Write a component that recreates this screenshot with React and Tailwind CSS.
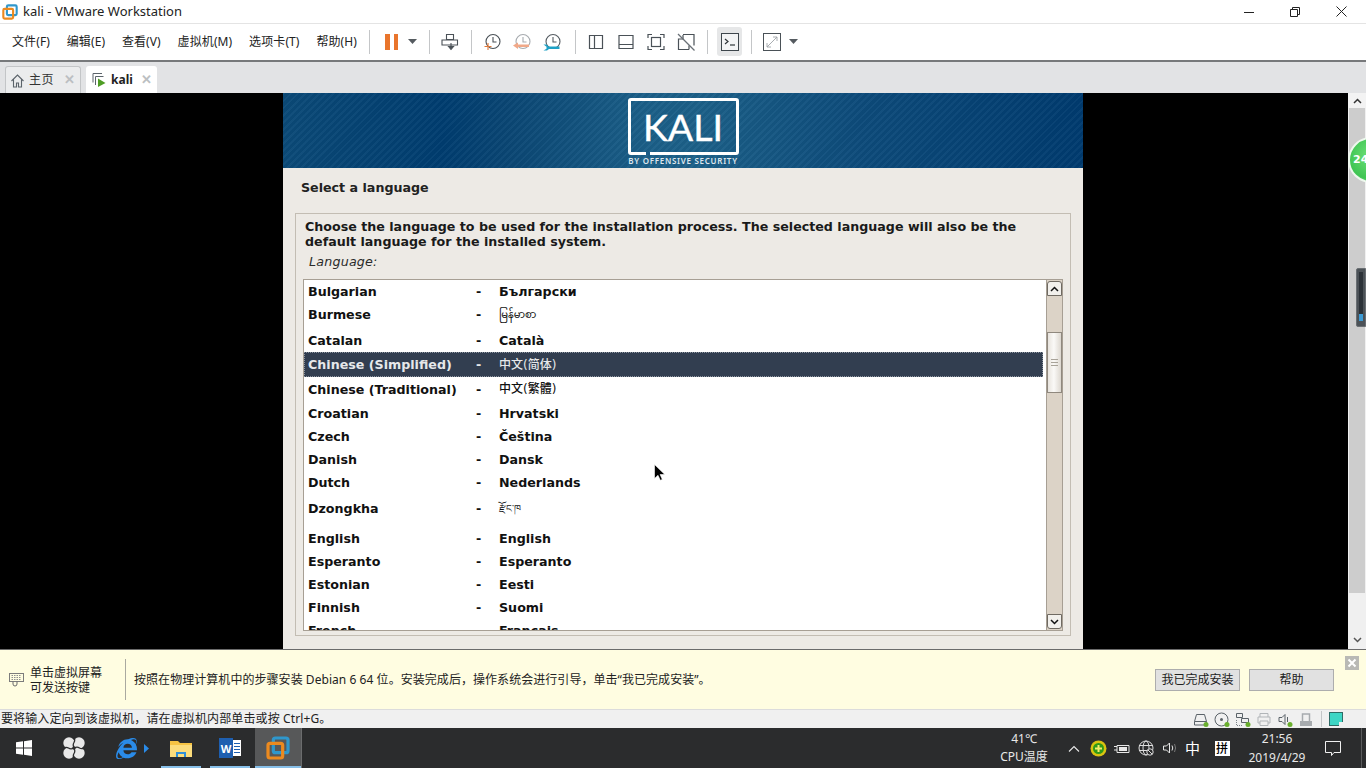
import React from "react";
import { FaInternetExplorer } from "react-icons/fa";

const cjk = "font-['Noto_Sans','Noto_Sans_CJK_SC',sans-serif]";
const deb = "font-['DejaVu_Sans','Noto_Sans_CJK_SC','Noto_Sans_Myanmar','Noto_Sans_Tibetan',sans-serif]";

const rows = [
  ["Bulgarian", "Български", "h-[23px]"],
  ["Burmese", "မြန်မာစာ", "h-[25px] pb-[2px]"],
  ["Catalan", "Català", "h-[24px]"],
  ["Chinese (Simplified)", "中文(简体)", "h-[25px]", true],
  ["Chinese (Traditional)", "中文(繁體)", "h-[24px]"],
  ["Croatian", "Hrvatski", "h-[24px]"],
  ["Czech", "Čeština", "h-[23px]"],
  ["Danish", "Dansk", "h-[23px]"],
  ["Dutch", "Nederlands", "h-[23px]"],
  ["Dzongkha", "རྫོང་ཁ", "h-[33px] pb-[4px]"],
  ["English", "English", "h-[23px]"],
  ["Esperanto", "Esperanto", "h-[23px]"],
  ["Estonian", "Eesti", "h-[23px]"],
  ["Finnish", "Suomi", "h-[23px]"],
  ["French", "Français", "h-[23px]"],
];

const S = ({ w = 20, h = 20, children, className = "" }) => (
  <svg width={w} height={h} viewBox={`0 0 ${w} ${h}`} fill="none" className={`shrink-0 ${className}`}>
    {children}
  </svg>
);

const Sep = () => <div className="w-px h-[24px] bg-[#c4c6c8] shrink-0" />;
const Btn = ({ children, className = "" }) => (
  <div className={`w-[30px] h-[30px] flex items-center justify-center shrink-0 ${className}`}>{children}</div>
);
const Caret = () => (
  <S w={9} h={5}><path d="M0 0h9L4.500 5z" fill="#555b60" /></S>
);

const stroke = "#4a5157";

const Clock = ({ c = stroke }) => (
  <>
    <circle cx="11" cy="8.500" r="7" stroke={c} strokeWidth="1.100" />
    <path d="M11 4v5h3.500" stroke={c} strokeWidth="1.100" />
  </>
);

function VMwareIcon({ size = 18 }) {
  return (
    <S w={size} h={size}>
      <svg viewBox="0 0 18 18" width={size} height={size}>
        <rect x="5.500" y="1.500" width="11" height="11" rx="1.500" stroke="#2f97cc" strokeWidth="2.400" fill="none" />
        <rect x="1.500" y="5.500" width="11" height="11" rx="1.500" stroke="#ec8a1f" strokeWidth="2.400" fill="none" />
      </svg>
    </S>
  );
}

function Toolbar() {
  return (
    <div className={`h-[37px] bg-white border-t border-[#e4e4e4] flex items-center pl-[12px] pb-[1px] text-[12px] text-[#222] ${cjk} shrink-0`}>
      <div className="flex gap-[16.800px] items-center w-[345px] whitespace-nowrap tracking-[0.1px]">
        <span>文件(F)</span><span>编辑(E)</span><span>查看(V)</span><span>虚拟机(M)</span><span>选项卡(T)</span><span>帮助(H)</span>
      </div>
      <div className="ml-[12px]"><Sep /></div>
      <div className="ml-[15px] flex gap-[4px]">
        <div className="w-[4.500px] h-[16px] bg-[#e9752c]" />
        <div className="w-[4.500px] h-[16px] bg-[#e9752c]" />
      </div>
      <div className="ml-[10px]"><Caret /></div>
      <div className="ml-[12px]"><Sep /></div>
      <Btn className="ml-[5px]">
        <S w={18} h={18}>
          <path d="M5.500 1.500h7v5h-7zM1 7h15.500v5H1z" stroke={stroke} strokeWidth="1.100" fill="#fff" />
          <path d="M10 10v5M7.500 13.500l2.500 3 2.500-3z" stroke={stroke} strokeWidth="1.100" fill={stroke} />
        </S>
      </Btn>
      <div className="ml-[6px]"><Sep /></div>
      <Btn className="ml-[5px]">
        <S w={20} h={18}>
          <Clock />
          <path d="M6 10v7M2.500 13.500h7" stroke="#e0793a" strokeWidth="1.100" />
        </S>
      </Btn>
      <Btn>
        <S w={20} h={18}>
          <Clock c="#a7abaf" />
          <path d="M1 12.500l5-3v2h11v2.500H6v2z" fill="#f0a888" />
        </S>
      </Btn>
      <Btn>
        <S w={20} h={18}>
          <Clock c="#555c62" />
          <path d="M1.500 11.500h3l2 2h11v2.500H7l-2 1.500H1.500l3-1.800v-2z" fill="#1ea1c6" />
        </S>
      </Btn>
      <div className="ml-[8px]"><Sep /></div>
      <Btn className="ml-[5px]"><S w={18} h={18}><path d="M2.500 2.500h13v13h-13zM7.500 2.500v13" stroke={stroke} strokeWidth="1.200" /></S></Btn>
      <Btn><S w={18} h={18}><path d="M2 2.500h14v13H2zM2 11.500h14" stroke={stroke} strokeWidth="1.200" /></S></Btn>
      <Btn>
        <S w={18} h={18}>
          <path d="M1 5V1.500h4M13 1.500h4V5M1 13v3.500h4M13 16.500h4V13" stroke={stroke} strokeWidth="1.200" />
          <rect x="4.500" y="4.500" width="9" height="9" stroke={stroke} strokeWidth="1.200" />
        </S>
      </Btn>
      <Btn>
        <S w={18} h={18}>
          <path d="M6 1.500h11v11M12 16.500H1.500V6H6M12 16.500v-4M6 6v-4" stroke={stroke} strokeWidth="1.200" />
          <path d="M1 1l16.500 16.500" stroke="#6a7076" strokeWidth="1.200" />
        </S>
      </Btn>
      <div className="ml-[6px]"><Sep /></div>
      <div className="ml-[9px] w-[25px] h-[29px] rounded-[3px] bg-[#e6e7e8] flex items-center justify-center">
        <S w={18} h={18}>
          <rect x="0.500" y="0.500" width="17" height="17" stroke="#3e464c" fill="#f3f4f5" />
          <path d="M4 6l3 2.500L4 11" stroke="#2e3438" strokeWidth="1.200" />
          <path d="M9 12h5" stroke="#2e3438" strokeWidth="1.200" />
        </S>
      </div>
      <div className="ml-[9px]"><Sep /></div>
      <div className="ml-[11px]">
        <S w={18} h={18}>
          <rect x="0.500" y="0.500" width="17" height="17" stroke={stroke} />
          <path d="M4 14L14 4M10 4h4v4M4 10v4h4" stroke="#9ea3a7" strokeWidth="0.900" />
        </S>
      </div>
      <div className="ml-[8px]"><Caret /></div>
    </div>
  );
}

function Tabs() {
  return (
    <div className={`h-[33px] bg-[#e2e3e5] border-t-2 border-[#77797b] flex items-end pl-[5px] gap-[5px] text-[12px] ${cjk} shrink-0`}>
      <div className="w-[76px] h-[27px] rounded-t-[3px] border border-b-0 border-[#c3c5c7] bg-[#ebeced] flex items-center pl-[4px] text-[#333]">
        <S w={15} h={15}><path d="M1.500 8L7.500 2l6 6M3.500 6.500V14h3V10h2v4h3V6.500" stroke="#5b636a" strokeWidth="1.100" /></S>
        <span className="ml-[4px] tracking-[0.5px]">主页</span>
        <span className="ml-[10px] text-[#bcbfc2] text-[13px] font-bold">✕</span>
      </div>
      <div className="w-[71px] h-[27px] rounded-t-[3px] bg-white flex items-center pl-[5px] text-[#222]">
        <S w={15} h={15}>
          <path d="M2 10.500V1.500h9" stroke="#5b636a" strokeWidth="1" />
          <path d="M4.500 13V4.500h8" stroke="#5b636a" strokeWidth="1" fill="none" />
          <path d="M7 6.500l7.500 4.500L7 15z" fill="#4f9d25" />
        </S>
        <span className="ml-[5px] font-bold">kali</span>
        <span className="ml-[8px] text-[#bcbfc2] text-[13px] font-bold">✕</span>
      </div>
    </div>
  );
}

function Logo() {
  return (
    <div className="w-[800px] h-[75px] shrink-0 flex flex-col items-center pt-[5px] bg-[repeating-linear-gradient(135deg,rgba(255,255,255,0.03)_0px,rgba(255,255,255,0.03)_2px,rgba(0,0,0,0.03)_2px,rgba(0,0,0,0.03)_5px),linear-gradient(90deg,#0b4a78_0%,#003d70_20%,#0a4674_28%,#1b5f88_45%,#1c6088_52%,#0d4b7b_72%,#003b6f_100%)]">
      <div className="relative w-[111px] h-[57px] border-[3px] border-white rounded-[3px] flex items-center justify-center">
        <span className="font-['Lato',sans-serif] text-white text-[37.500px] leading-none [-webkit-text-stroke:0.4px_white] mt-[1px]">KALI</span>
        <span className="absolute left-[15px] -bottom-[3px] w-[4px] h-[3px] bg-[#1b5c87]" />
      </div>
      <span className="font-['Noto_Sans',sans-serif] font-semibold text-[#dfe7ee] text-[8px] leading-[10px] tracking-[0.72px] mt-[1px] whitespace-nowrap">BY OFFENSIVE SECURITY</span>
    </div>
  );
}

function ListScroll() {
  return (
    <div className="w-[16px] border-l border-[#a79f94] bg-[#dcd3c7] flex flex-col shrink-0">
      <div className="h-[15px] mt-px bg-[#f2f0ec] border border-[#6f6a62] rounded-t-[3px] flex items-center justify-center">
        <S w={9} h={6}><path d="M1 5l3.500-3.500L8 5" stroke="#111" strokeWidth="1.500" /></S>
      </div>
      <div className="h-[36px]" />
      <div className="h-[61px] bg-[linear-gradient(90deg,#e8e4de,#faf9f7_45%,#ddd8d0)] border border-[#8f887e] flex flex-col items-center justify-center gap-[2px]">
        <div className="w-[7px] h-px bg-[#a8a399]" /><div className="w-[7px] h-px bg-[#a8a399]" /><div className="w-[7px] h-px bg-[#a8a399]" />
      </div>
      <div className="flex-1" />
      <div className="h-[15px] mb-px bg-[#f2f0ec] border border-[#6f6a62] rounded-b-[3px] flex items-center justify-center">
        <S w={9} h={6}><path d="M1 1l3.500 3.500L8 1" stroke="#111" strokeWidth="1.500" /></S>
      </div>
    </div>
  );
}

function Guest() {
  return (
    <div className={`w-[800px] h-full bg-[#edeae5] flex flex-col shrink-0 ${deb} text-[12.670px] text-black`}>
      <Logo />
      <div className="h-[45px] shrink-0 pl-[18px] pt-[12px] font-bold leading-[16px] text-[#222]">Select a language</div>
      <div className="mx-[12px] h-[423px] border border-[#c3bdb3] shrink-0 flex flex-col px-[7px]">
        <div className="font-bold leading-[15px] pl-[2px] pt-[5px] text-[#1a1a1a]">
          Choose the language to be used for the installation process. The selected language will also be the<br />
          default language for the installed system.
        </div>
        <div className="italic pl-[6px] mt-[5px] leading-[16px] text-[#2a2a2a] tracking-[0.2px]">Language:</div>
        <div className="mt-[9px] h-[352px] border border-[#a79f94] bg-white flex overflow-hidden">
          <div className="flex-1 overflow-hidden font-bold">
            {rows.map(([n, v, h, sel]) => (
              <div key={n} className={`${h} flex items-center pl-[4px] whitespace-nowrap ${sel ? "bg-[#323e50] text-[#e6e8ea] outline-1 -outline-offset-1 outline-dotted outline-[#8d95a0]" : "text-[#111]"}`}>
                <span className="w-[168px]">{n}</span>
                <span className="w-[23px]">-</span>
                <span className={/[\u4e00-\u9fff]/.test(v) ? "text-[12px] font-medium" : /[\u1000-\u109f\u0f00-\u0fff]/.test(v) ? "text-[10px] font-normal" : ""}>{v}</span>
              </div>
            ))}
          </div>
          <div className="w-[3px] shrink-0" />
          <ListScroll />
        </div>
      </div>
    </div>
  );
}

function Info() {
  return (
    <div className={`relative h-[59px] bg-[#fffde1] flex items-center text-[12px] text-[#222] ${cjk} shrink-0`}>
      <div className="w-[30px] flex justify-center pl-[2px]">
        <S w={15} h={15}>
          <rect x="0.500" y="1.500" width="14" height="8" stroke="#7c7c7c" />
          <path d="M2.500 3.500h10M2.500 5.500h10M2.500 7.500h10" stroke="#8f8f8f" strokeDasharray="1.500 1" />
          <path d="M4 9.500v2.500a2 2 0 0 0 4 0V9.500" stroke="#6b6b6b" />
        </S>
      </div>
      <div className="w-[95px] leading-[15px]">单击虚拟屏幕<br />可发送按键</div>
      <div className="w-px h-[41px] bg-[#aaa9a0]" />
      <div className="ml-[8px] w-[1021px] whitespace-nowrap tracking-[0.05px]">按照在物理计算机中的步骤安装 Debian 6 64 位。安装完成后，操作系统会进行引导，单击“我已完成安装”。</div>
      <div className="w-[85px] h-[22px] bg-[#e1e1e1] border border-[#adadad] flex items-center justify-center">我已完成安装</div>
      <div className="ml-[9px] w-[85px] h-[22px] bg-[#e1e1e1] border border-[#adadad] flex items-center justify-center">帮助</div>
      <div className="absolute right-[7px] top-[6px] w-[14px] h-[14px] bg-[#b9b9b5] flex items-center justify-center">
        <S w={10} h={10}><path d="M1.500 1.500l7 7M8.500 1.500l-7 7" stroke="#fff" strokeWidth="2" /></S>
      </div>
    </div>
  );
}

const Dot = () => <circle cx="13" cy="12.500" r="2.500" fill="#6aaf2e" />;

function Status() {
  return (
    <div className={`h-[19px] bg-[#f0f0f0] border-t border-[#dcdcdc] flex items-center pl-px text-[12px] text-[#222] ${cjk} shrink-0`}>
      <span className="whitespace-nowrap tracking-[0.12px]">要将输入定向到该虚拟机，请在虚拟机内部单击或按 Ctrl+G。</span>
      <div className="ml-auto flex items-center gap-[5px] pr-[23px]">
        <S w={16} h={15}><path d="M1.500 9.500l2-7h8l2 7v3.500h-12zM1.500 9.500h12" stroke="#5a6268" /><Dot /></S>
        <S w={16} h={15}><circle cx="7.500" cy="7.500" r="6.500" stroke="#5a6268" /><circle cx="7.500" cy="7.500" r="1.500" fill="#5a6268" /><Dot /></S>
        <S w={16} h={15}><path d="M1.500 1.500h6v4h-6zM6.500 6.500h7v4h-7z" stroke="#5a6268" /><path d="M1.500 8v5.500h6" stroke="#7a8288" strokeDasharray="1 1" /><Dot /></S>
        <S w={16} h={15}><path d="M4 5V1.500h8V5M2 5h12v6h-2M4 11H2V5M4 9h8v4.500H4z" stroke="#b1b5b8" /></S>
        <S w={16} h={15}><path d="M2 5.500h3l3-3v10l-3-3H2zM10.500 5v5" stroke="#5a6268" /><Dot /></S>
        <S w={16} h={15}><path d="M2 9h12v5H2z" fill="#a7abae" /><path d="M4.500 9V2h7v7" stroke="#a7abae" strokeWidth="1.500" /></S>
        <div className="w-px h-[16px] bg-[#c4c6c8] ml-[2px]" />
        <div className="ml-[2px] relative w-[14px] h-[14px] bg-[#3ed6c5] border border-[#2f6b66]">
          <span className="absolute right-[-1px] bottom-[-1px] w-[4px] h-[4px] bg-[#f0f0f0]" />
        </div>
      </div>
    </div>
  );
}

function Slot({ children, className = "w-[24px]" }) {
  return <div className={`${className} shrink-0 flex items-center justify-center`}>{children}</div>;
}

function Taskbar() {
  return (
    <div className={`h-[40px] bg-[#2b2c2d] flex items-stretch text-white ${cjk} shrink-0 relative`}>
      <div className="w-[48px] flex items-center justify-center">
        <S w={16} h={16}><path d="M0 2.300l7-1v6.300H0zM8 1.200L16 0v7.600H8zM0 8.500h7v6.300l-7-1zM8 8.500h8V16l-8-1.200z" fill="#fff" /></S>
      </div>
      <div className="w-[52px] flex items-center justify-center">
        <S w={22} h={22}>
          <circle cx="6" cy="6" r="5.700" fill="#e8e8e8" />
          <circle cx="16" cy="6" r="5.700" fill="#e8e8e8" />
          <circle cx="6" cy="16" r="5.700" fill="#e8e8e8" />
          <circle cx="16" cy="16" r="5.700" fill="#e8e8e8" />
          <path d="M11 11c-1-2-1-4 0-5.500 1-1.500 1-3 0-5.500M11 11c2-1 4-1 5.500 0 1.500 1 3 1 5.500 0M11 11c1 2 1 4 0 5.500-1 1.500-1 3 0 5.500M11 11c-2 1-4 1-5.500 0-1.500-1-3-1-5.500 0" stroke="#2b2c2d" strokeWidth="1.300" />
        </S>
      </div>
      <div className="w-[61px] flex items-center pl-[16px]">
        <FaInternetExplorer className="text-[#2a8be8]" size={21} />
        <S w={5} h={9} className="ml-[7px]"><path d="M0 0l5 4.500L0 9z" fill="#2a8be8" /></S>
      </div>
      <div className="w-[40px] flex items-center justify-center relative">
        <S w={22} h={20}>
          <path d="M0 3h8l2 2h12v14H0z" fill="#f6c343" />
          <path d="M0 7h22v12H0z" fill="#fbdc7c" />
          <path d="M6 14h10v5h-2v-3H8v3H6z" fill="#2f8fd8" />
        </S>
        <div className="absolute bottom-0 left-0 right-0 h-[2px] bg-[#87bfe8]" />
      </div>
      <div className="w-[40px] ml-[9px] flex items-center justify-center relative">
        <div className="relative w-[22px] h-[20px] flex">
          <div className="w-[14px] h-[20px] bg-[#1e5fb0] flex items-center justify-center text-[11px] font-bold leading-none">W</div>
          <div className="w-[8px] my-[2px] bg-white flex flex-col justify-around px-[1px] py-[2px]">
            <div className="h-px bg-[#1e5fb0]" /><div className="h-px bg-[#1e5fb0]" /><div className="h-px bg-[#1e5fb0]" /><div className="h-px bg-[#1e5fb0]" />
          </div>
        </div>
        <div className="absolute bottom-0 left-0 right-0 h-[2px] bg-[#87bfe8]" />
      </div>
      <div className="w-[47px] ml-[5px] bg-[#575859] flex items-center justify-center relative border-r border-[#6b6c6d]">
        <VMwareIcon size={24} />
        <div className="absolute bottom-0 left-0 right-0 h-[2px] bg-[#87bfe8]" />
      </div>
      <div className="flex-1" />
      <div className="w-[60px] flex flex-col items-center justify-center text-[12px] leading-[18px] text-[#e8e8e8]">
        <span>41℃</span><span>CPU温度</span>
      </div>
      <div className="w-[8px]" />
      <Slot><S w={12} h={7}><path d="M1 6.500l5-5 5 5" stroke="#e8e8e8" strokeWidth="1.100" /></S></Slot>
      <Slot><S w={17} h={17}><circle cx="8.500" cy="8.500" r="8" fill="#d9c310" /><circle cx="8.500" cy="8.500" r="5.500" fill="#2f9a18" /><path d="M8.500 5v7M5 8.500h7" stroke="#f3ee6a" strokeWidth="2" /></S></Slot>
      <Slot><S w={16} h={14}><path d="M3 4.500h12v7H3zM0 5.500h3M0 9h3" stroke="#e8e8e8" /><rect x="5" y="6" width="8" height="4" fill="#e8e8e8" /></S></Slot>
      <Slot><S w={16} h={16}><circle cx="8" cy="8" r="7" stroke="#ddd" /><ellipse cx="8" cy="8" rx="3" ry="7" stroke="#ddd" /><path d="M1 5.500h14M1 10.500h14" stroke="#ddd" /><circle cx="12" cy="12" r="3.200" fill="#2b2c2d" stroke="#ddd" /><path d="M10 10l4 4" stroke="#ddd" /></S></Slot>
      <Slot className="w-[23px]"><S w={16} h={14}><path d="M1.500 5h3l3-3v10l-3-3h-3z" stroke="#e8e8e8" /><path d="M10 4.500q1.500 2.500 0 5" stroke="#e8e8e8" /><path d="M12.500 3q2.200 4 0 8" stroke="#777" /></S></Slot>
      <Slot className="w-[23px]"><span className="text-[15px] leading-none">中</span></Slot>
      <Slot className="w-[36px]"><div className="w-[15px] h-[15px] bg-white text-black text-[12px] leading-[15px] text-center font-medium">拼</div></Slot>
      <div className="w-[74px] flex flex-col items-center justify-center text-[12px] leading-[19px] text-[#e8e8e8]">
        <span>21:56</span><span>2019/4/29</span>
      </div>
      <div className="w-[38px] flex items-center justify-center">
        <S w={16} h={16}><path d="M.5 1.500h15v11H9l-2.500 3v-3H.5z" stroke="#f0f0f0" /></S>
      </div>
      <div className="w-[5px] ml-[9px] border-l border-[#5a5b5c]" />
    </div>
  );
}

export default function App() {
  return (
    <div className="relative w-[1366px] h-[768px] overflow-hidden bg-white flex flex-col">
      <div className={`h-[23px] flex items-center bg-white text-[13px] text-[#222] ${cjk} shrink-0`}>
        <div className="pl-[2px] pr-[5px]"><VMwareIcon size={16} /></div>
        <span>kali - VMware Workstation</span>
        <div className="ml-auto flex items-center pr-[2px]">
          <div className="w-[46px] flex justify-center"><S w={10} h={10}><path d="M0 5.500h10" stroke="#222" /></S></div>
          <div className="w-[46px] flex justify-center"><S w={10} h={10}><path d="M.5 2.500h7v7h-7zM2.500 2.500v-2h7v7h-2" stroke="#222" /></S></div>
          <div className="w-[46px] flex justify-center"><S w={11} h={11}><path d="M.5.500l10 10M10.500.500l-10 10" stroke="#222" /></S></div>
        </div>
      </div>
      <Toolbar />
      <Tabs />
      <div className="h-[556px] flex bg-black shrink-0">
        <div className="w-[283px] shrink-0" />
        <Guest />
        <div className="w-[265px] shrink-0" />
        <div className="w-[18px] shrink-0 bg-[#f0f0f0] relative flex flex-col">
          <div className="h-[15px] bg-[#f3f3f3] flex items-center justify-center">
            <S w={9} h={6}><path d="M1 5l3.500-3.500L8 5" stroke="#333" strokeWidth="1.500" /></S>
          </div>
          <div className="h-[485px] mx-[1px] bg-[#cdcdcd]" />
          <div className="flex-1" />
          <div className="h-[15px] flex items-center justify-center mb-[2px]">
            <S w={9} h={6}><path d="M1 1l3.500 3.500L8 1" stroke="#555" strokeWidth="1.500" /></S>
          </div>
          <div className="absolute left-0 top-[44px] w-[46px] h-[46px] rounded-full border-[2px] border-[#eef8ee] bg-[radial-gradient(circle_at_50%_40%,#6fe27a,#3fc452_70%,#a6e6ae)] flex items-center pl-[3px] text-white font-bold text-[11px] font-['DejaVu_Sans',sans-serif]">24</div>
          <div className="absolute left-[8px] top-[175px] w-[10px] h-[59px] rounded-l-[2px] bg-[#4c5257] border border-[#6a6f73] flex flex-col justify-end pb-[5px] pl-[2px]">
            <div className="w-[4px] flex-1 mt-[3px] bg-[#2c3238] flex flex-col justify-end">
              <div className="w-[4px] h-[7px] bg-[#3d9bd4]" />
            </div>
          </div>
        </div>
      </div>
      <div className="h-px bg-[#6b6b6b] shrink-0" />
      <Info />
      <Status />
      <Taskbar />
      <svg width="11" height="17" viewBox="0 0 11 17" className="absolute left-[654px] top-[464px]">
        <path d="M0.500 0.500v14l3.500-3.200 2.300 5 2-0.900-2.200-4.900h4.700z" fill="#000" stroke="#fff" strokeWidth="0.600" />
      </svg>
    </div>
  );
}
